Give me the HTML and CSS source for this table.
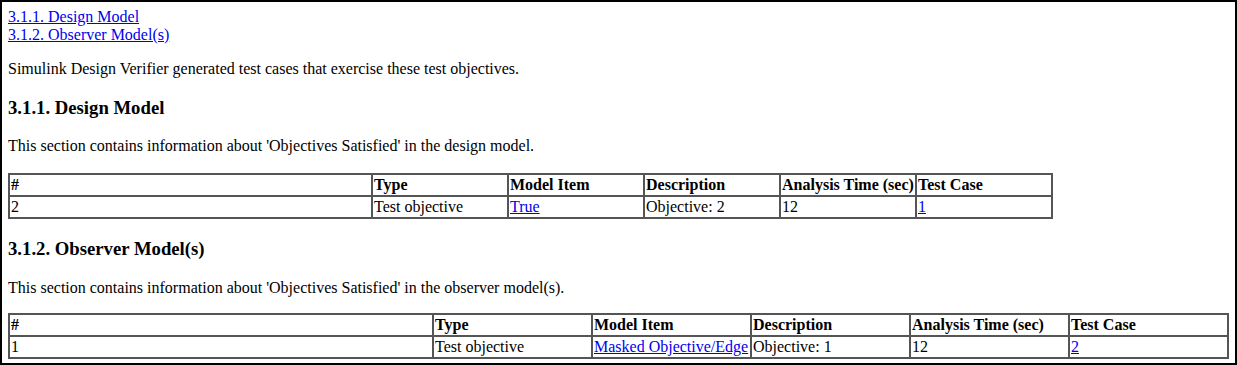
FILE: index.html
```html
<!DOCTYPE html>
<html>
<head>
<meta charset="utf-8">
<link rel="stylesheet" href="styles.css">
</head>
<body>
<div class="frame">
  <div class="toc">
    <a href="#design">3.1.1. Design Model</a><br>
    <a href="#observer">3.1.2. Observer Model(s)</a>
  </div>
  <p>Simulink Design Verifier generated test cases that exercise these test objectives.</p>
  <h3 id="design">3.1.1. Design Model</h3>
  <p>This section contains information about 'Objectives Satisfied' in the design model.</p>
  <table class="grid grid-design">
    <colgroup>
      <col class="c-num"><col class="c-rest"><col class="c-rest"><col class="c-rest"><col class="c-rest"><col class="c-rest">
    </colgroup>
    <tr><th>#</th><th>Type</th><th>Model Item</th><th>Description</th><th>Analysis Time (sec)</th><th>Test Case</th></tr>
    <tr><td>2</td><td>Test objective</td><td><a href="#">True</a></td><td>Objective: 2</td><td>12</td><td><a href="#">1</a></td></tr>
  </table>
  <h3 id="observer">3.1.2. Observer Model(s)</h3>
  <p>This section contains information about 'Objectives Satisfied' in the observer model(s).</p>
  <table class="grid grid-observer">
    <colgroup>
      <col class="c-num"><col class="c-rest"><col class="c-rest"><col class="c-rest"><col class="c-rest"><col class="c-rest">
    </colgroup>
    <tr><th>#</th><th>Type</th><th>Model Item</th><th>Description</th><th>Analysis Time (sec)</th><th>Test Case</th></tr>
    <tr><td>1</td><td>Test objective</td><td><a href="#">Masked Objective/Edge</a></td><td>Objective: 1</td><td>12</td><td><a href="#">2</a></td></tr>
  </table>
</div>
</body>
</html>
```
FILE: styles.css
```css
html, body {
  margin: 0;
  padding: 0;
  background: #fff;
}
.frame {
  box-sizing: border-box;
  height: 365px;
  width: 1237px;
  border: 2px solid #000;
  padding: 6px;
  overflow: hidden;
  font-family: "Liberation Serif", "Times New Roman", serif;
  font-size: 16px;
  color: #000;
}
a { color: #0000ee; }
p { margin: 16px 0; }
h3 {
  font-size: 1.17em;
  font-weight: bold;
  margin: 1em 0;
}
.grid {
  border: 1px solid #555;
  border-collapse: separate;
  border-spacing: 0;
  table-layout: fixed;
}
.grid th, .grid td {
  border: 1px solid #555;
  padding: 1px;
  line-height: 18px;
  text-align: left;
  vertical-align: top;
  white-space: nowrap;
}
.grid th { font-weight: bold; }
.grid-design {
  width: 1044px;
  margin-top: 18px;
}
.grid-design .c-num { width: 363px; }
.grid-design .c-rest { width: 136px; }
.grid-observer { width: 100%; }
.grid-observer .c-num { width: 424px; }
.grid-observer .c-rest { width: 159px; }
```
